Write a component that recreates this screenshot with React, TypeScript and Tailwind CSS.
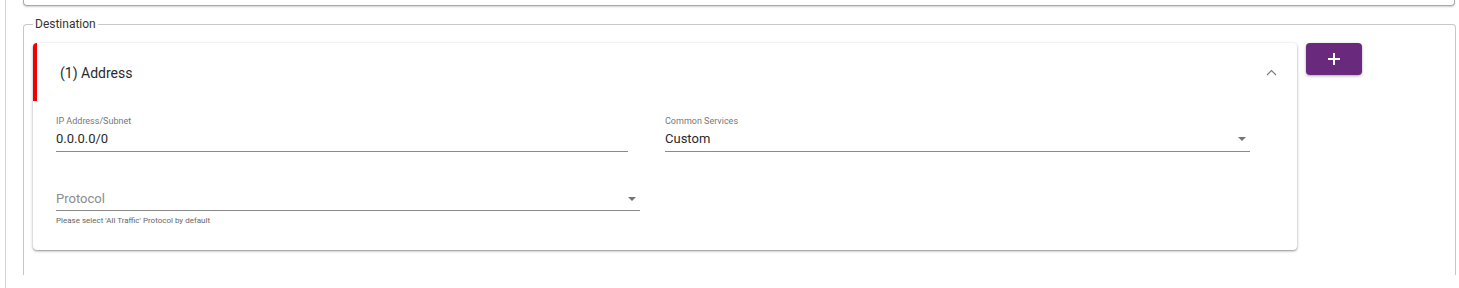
import React from "react";

const Caret = () => (
  <svg width="8" height="4" viewBox="0 0 8 4" className="shrink-0">
    <path d="M0 0 L8 0 L4 4 Z" fill="#757575" />
  </svg>
);

const Field = ({ label, value, width }: { label: string; value: string; width: string }) => (
  <div className={width}>
    <div className="text-[9px] leading-[12px] text-[#777]">{label}</div>
    <div className="mt-[3px] pb-[3px] border-b border-[#8a8a8a] text-[13px] leading-[18px] text-[#2a2a2a]">
      {value}
    </div>
  </div>
);

const SelectField = ({ label, value, width }: { label: string; value: string; width: string }) => (
  <div className={width}>
    <div className="text-[9px] leading-[12px] text-[#777]">{label}</div>
    <div className="mt-[3px] pb-[3px] border-b border-[#8a8a8a] flex items-center justify-between pr-[4px]">
      <span className="text-[13px] leading-[18px] text-[#2a2a2a]">{value}</span>
      <Caret />
    </div>
  </div>
);

const AddressCard = () => (
  <div className="w-[1264px] h-[207px] bg-white rounded-[4px] shadow-[0_1px_3px_rgba(0,0,0,0.35),0_1px_1px_rgba(0,0,0,0.14)]">
    <div className="h-[58px] border-l-4 border-[#f20000] rounded-tl-[4px] flex items-center justify-between pl-[23px] pr-[20px] pt-[2px]">
      <span className="text-[14px] text-[#2a2a2a]">(1) Address</span>
      <svg width="11" height="7" viewBox="0 0 11 7" className="-mt-[2px]">
        <polyline points="1,6 5.5,1.5 10,6" fill="none" stroke="#7a7a7a" strokeWidth="1.1" />
      </svg>
    </div>
    <div className="pl-[23px] pt-[14px]">
      <div className="flex">
        <Field label="IP Address/Subnet" value="0.0.0.0/0" width="w-[572px]" />
        <SelectField label="Common Services" value="Custom" width="w-[585px] ml-[37px]" />
      </div>
      <div className="mt-[38px] w-[584px]">
        <div className="pb-[2px] border-b border-[#8a8a8a] flex items-center justify-between pr-[4px]">
          <span className="text-[13px] leading-[18px] text-[#8c8c8c]">Protocol</span>
          <Caret />
        </div>
        <div className="mt-[5px] text-[8px] leading-[10px] text-[#666]">
          Please select 'All Traffic' Protocol by default
        </div>
      </div>
    </div>
  </div>
);

export default function App() {
  return (
    <div className="w-[1459px] h-[288px] bg-white overflow-hidden font-['Roboto',sans-serif]">
      <div className="ml-[5px] h-full border-l border-[#d6d6d6] pl-[17px] pr-[3px]">
        <div className="w-[1432px] h-[6px] border-x border-b border-[#a8a8a8] rounded-b-[4px] shadow-[0_1px_2px_rgba(0,0,0,0.2)]" />
        <fieldset className="mt-[11px] w-[1433px] h-[258px] border border-b-0 border-[#c8c8c8] rounded-t-[4px] pl-[9px]">
          <legend className="px-[2px] text-[12px] leading-[14px] text-[#333]">Destination</legend>
          <div className="mt-[12px] flex items-start gap-[9px]">
            <AddressCard />
            <button className="w-[56px] h-[32px] rounded-[4px] bg-[#69297d] flex items-center justify-center shadow-[0_1px_3px_rgba(0,0,0,0.35)]">
              <svg width="14" height="14" viewBox="0 0 14 14">
                <path d="M7 1 V13 M1 7 H13" stroke="#fff" strokeWidth="2" />
              </svg>
            </button>
          </div>
        </fieldset>
      </div>
    </div>
  );
}
